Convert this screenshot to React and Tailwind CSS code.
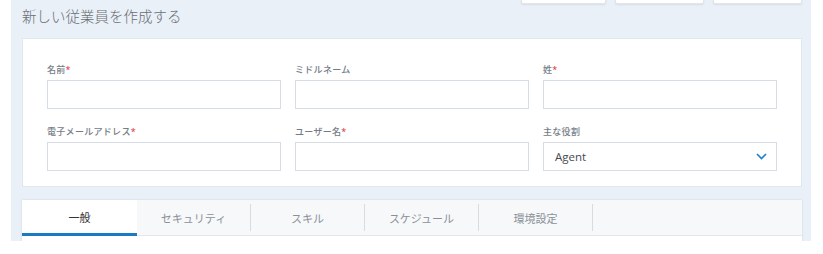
import React from 'react';

const jp = { fontFamily: '"Open Sans", "Noto Sans CJK JP", sans-serif' };

function Field({ label, required, children }) {
    return (
        <div className="flex flex-col">
            <div className="text-[9px] leading-[12px] font-medium text-[#747c86] mb-[4px] whitespace-nowrap tracking-[0.3px]">
                {label}
                {required && <span className="text-[#e0262d]">*</span>}
            </div>
            {children || <div className="h-[29px] bg-white border border-[#d7dde4]"></div>}
        </div>
    );
}

export default function App() {
    const tabs = ['セキュリティ', 'スキル', 'スケジュール', '環境設定'];

    return (
        <div className="w-[823px] h-[254px] bg-white overflow-hidden" style={jp}>
            <div className="ml-[11px] w-[800px] h-[241px] bg-[#e9f0f7] pl-[11px] pr-[9px] overflow-hidden">
                {/* Header */}
                <div className="flex justify-between items-start h-[38px]">
                    <h1 className="pt-[7px] text-[14.5px] leading-[20px] font-light text-[#6a6e74]">
                        新しい従業員を作成する
                    </h1>
                    <div className="flex gap-[9px] -mt-[26px]">
                        <div className="w-[85px] h-[30px] bg-white rounded-[2px] border border-[#e2e6ea] shadow-[0_1px_2px_rgba(0,0,0,0.08)]"></div>
                        <div className="w-[89px] h-[30px] bg-white rounded-[2px] border border-[#e2e6ea] shadow-[0_1px_2px_rgba(0,0,0,0.08)]"></div>
                        <div className="w-[89px] h-[30px] bg-white rounded-[2px] border border-[#e2e6ea] shadow-[0_1px_2px_rgba(0,0,0,0.08)]"></div>
                    </div>
                </div>

                {/* Form card */}
                <div className="bg-white border border-[#e1e7ee] px-[24px] pt-[25px] pb-[15px]">
                    <div className="grid grid-cols-3 gap-x-[14px] gap-y-[17px]">
                        <Field label="名前" required />
                        <Field label="ミドルネーム" />
                        <Field label="姓" required />
                        <Field label="電子メールアドレス" required />
                        <Field label="ユーザー名" required />
                        <Field label="主な役割">
                            <div className="h-[29px] bg-white border border-[#d7dde4] flex items-center justify-between pl-[11px] pr-[9px]">
                                <span className="text-[11.5px] text-[#454a50]">Agent</span>
                                <svg width="11" height="7" viewBox="0 0 11 7" fill="none">
                                    <polyline points="1,1 5.5,5.5 10,1" stroke="#1b7fcc" strokeWidth="1.6" />
                                </svg>
                            </div>
                        </Field>
                    </div>
                </div>

                {/* Tabs card */}
                <div className="mt-[13px] bg-white shadow-[0_0_2px_rgba(0,0,0,0.12)] h-[60px]">
                    <div className="flex h-[36px] bg-[#f6f8fa] border-b border-[#e3e7eb]">
                        <div className="w-[115px] h-[36px] -mb-px bg-white border-b-[3px] border-[#1a7bc4] flex items-center justify-center pt-[3px] text-[11px] text-[#333]">
                            一般
                        </div>
                        {tabs.map(t => (
                            <div key={t} className="flex items-center">
                                <div className="w-[113px] flex items-center justify-center pt-[3px] text-[11px] text-[#8a9097]">{t}</div>
                                <div className="w-px h-[27px] bg-[#d8dce1]"></div>
                            </div>
                        ))}
                    </div>
                </div>
            </div>
        </div>
    );
}
